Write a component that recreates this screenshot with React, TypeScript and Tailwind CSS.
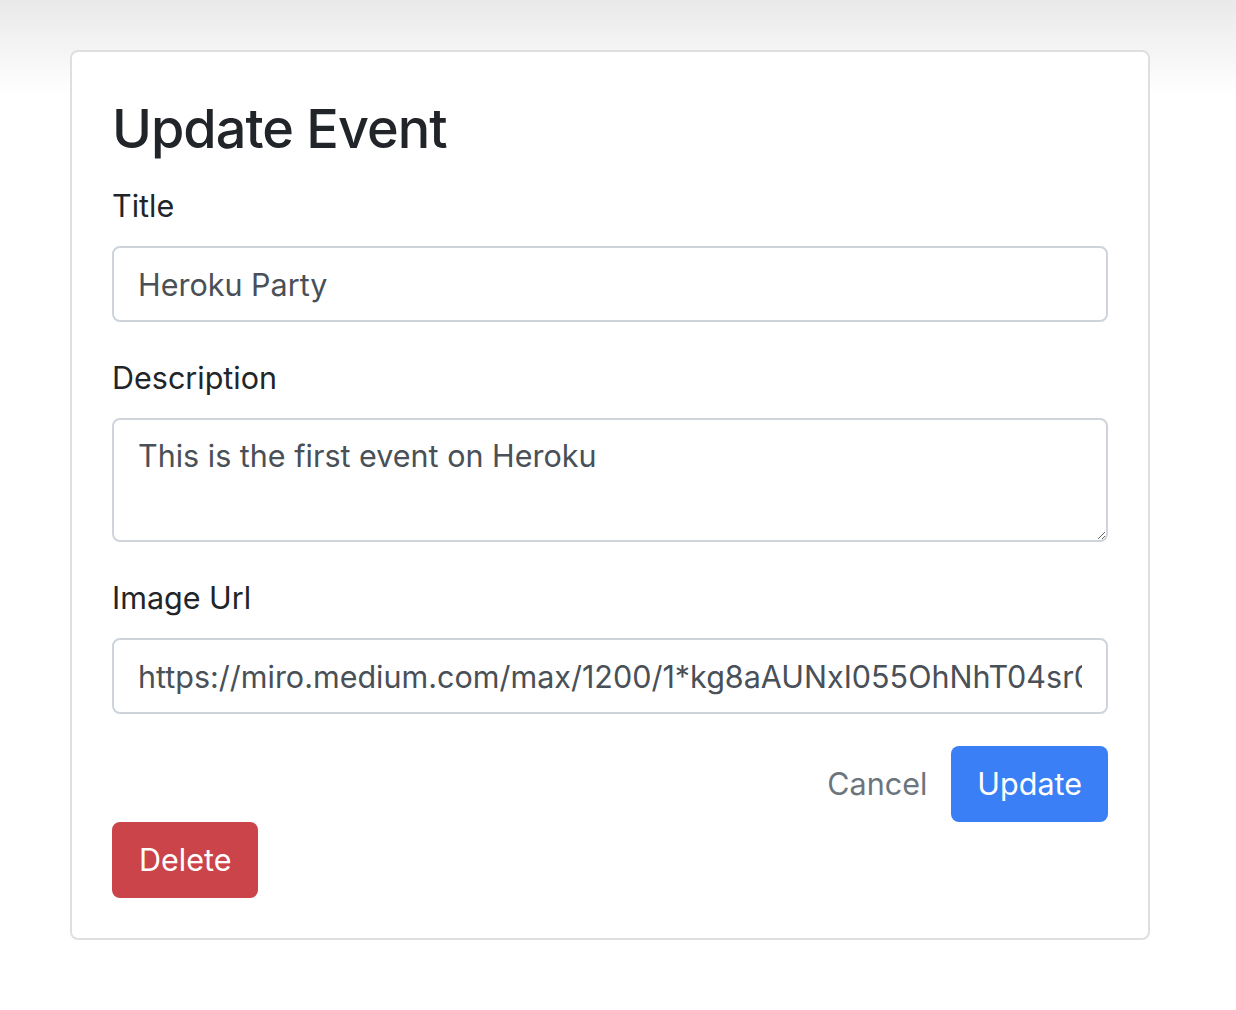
import { useState } from "react";

const font = { fontFamily: "Inter, 'Noto Sans', sans-serif" };

export default function App() {
  const [title, setTitle] = useState("Heroku Party");
  const [description, setDescription] = useState(
    "This is the first event on Heroku"
  );
  const [imageUrl, setImageUrl] = useState(
    "https://miro.medium.com/max/1200/1*kg8aAUNxI055OhNhT04sr0AFFkz8wN3mZiWzMvv0x7ywuA.png"
  );

  return (
    <div
      className="min-h-[1010px] w-full bg-[linear-gradient(to_bottom,#e9e9e9_0px,#ffffff_95px)] pl-[70px] pt-[50px] text-[#212529]"
      style={font}
    >
      <div className="w-[1080px] rounded-[8px] border-2 border-[#dfdfdf] bg-white p-[40px]">
        <h2 className="mb-4 text-[54px] font-medium leading-[74px] tracking-[-1px]">
          Update Event
        </h2>

        <div className="mb-8">
          <label className="mb-4 block text-[30.5px] leading-[48px]">Title</label>
          <input
            className="block h-[76px] w-full rounded-[8px] border-2 border-[#ced4da] px-[24px] text-[30.5px] text-[#495057] outline-none"
            value={title}
            onChange={(e) => setTitle(e.target.value)}
          />
        </div>

        <div className="mb-8">
          <label className="mb-4 block text-[30.5px] leading-[48px]">
            Description
          </label>
          <textarea
            rows={2}
            className="block h-[124px] w-full rounded-[8px] border-2 border-[#ced4da] px-[24px] py-[12px] text-[30.5px] leading-[48px] text-[#495057] outline-none"
            value={description}
            onChange={(e) => setDescription(e.target.value)}
          />
        </div>

        <div className="mb-8">
          <label className="mb-4 block text-[30.5px] leading-[48px]">
            Image Url
          </label>
          <input
            className="block h-[76px] w-full rounded-[8px] border-2 border-[#ced4da] px-[24px] text-[30.5px] text-[#495057] outline-none"
            value={imageUrl}
            onChange={(e) => setImageUrl(e.target.value)}
          />
        </div>

        <div className="flex justify-end">
          <button className="h-[76px] px-[24px] text-[30.5px] text-[#6c757d]">
            Cancel
          </button>
          <button className="h-[76px] rounded-[8px] bg-[#3a7ff6] px-[26px] text-[30.5px] text-white">
            Update
          </button>
        </div>
        <div>
          <button className="h-[76px] rounded-[8px] bg-[#ca444a] px-[27px] text-[30.5px] text-white">
            Delete
          </button>
        </div>
      </div>
    </div>
  );
}
